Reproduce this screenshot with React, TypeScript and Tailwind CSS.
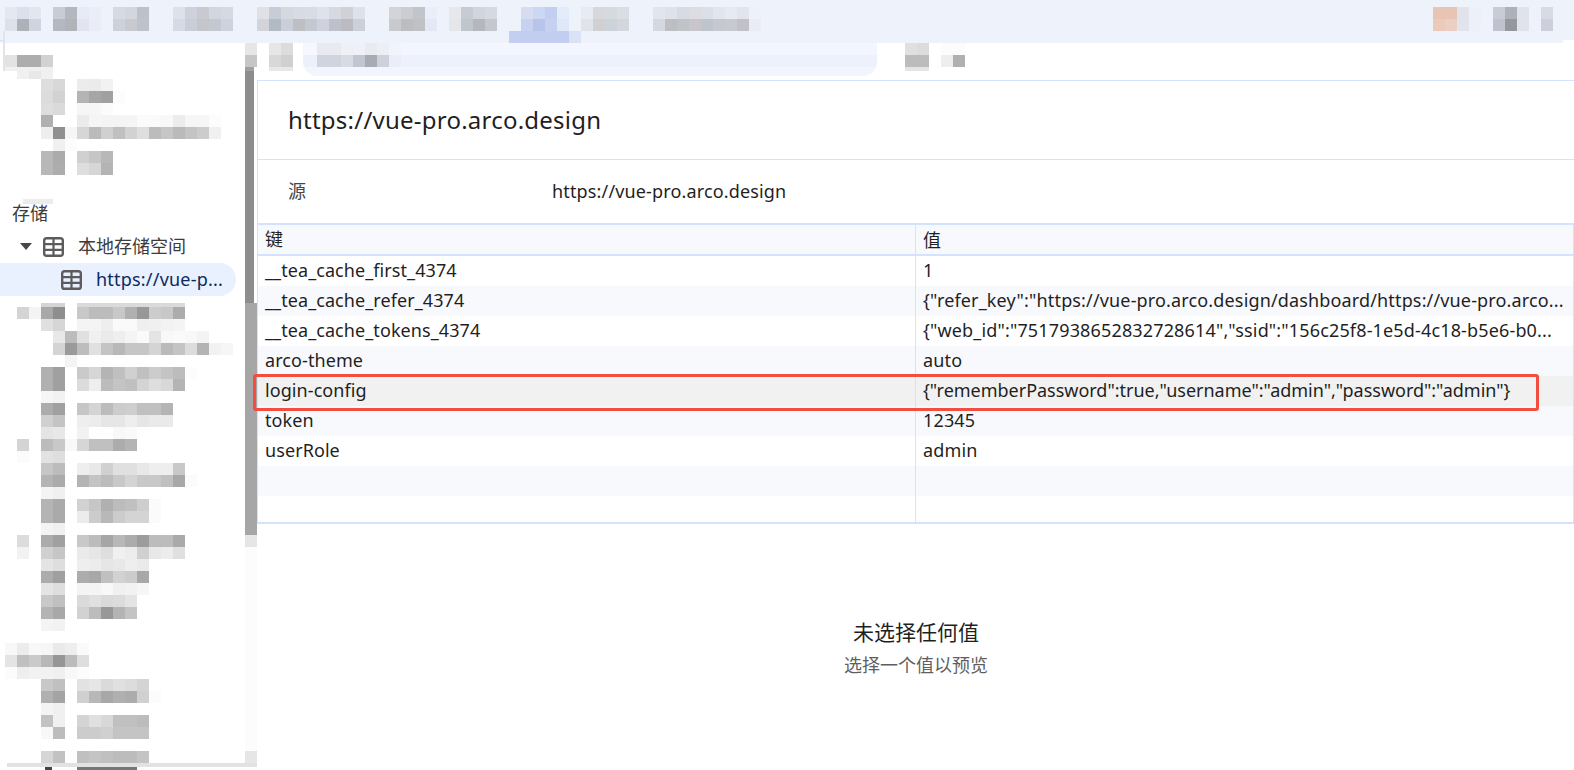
const MOSAIC: [number, number, string][] = [
  [7, 5, "e3e8f2 dbe0ea e2e6f0 -- c8ccd6 b4b8be e8ebf6 ebeef9 -- d6dae4 d2d6de bcc2cc -- -- dde1ea cdd1db c8cad0 d2d6de d4d9e3 -- -- dfe1e6 c7cdd8 d5d8de d6dbe4 d8dce5 dfe2ec d5d9e2 d0d1d6 dde1ea -- -- d2d4da cccdd1 c0c5ca eaeef8 -- e6e8ee c8ccd2 d2d5dc d6d9e0 -- -- d8dcf2 ccd7f3 c3cff0 e4ecfa -- e8ebf2 d6d8dc d5dadc dadde2 -- -- e2e5ed e0e2e9 d8dbe2 dcdce2 dae0ea e2e5ee e7eaf1 e3e5ee eef1fa"],
  [19, 5, "dce1ea adb2b8 d0d4de -- b4b8c0 b0b3b8 e2e5f1 eaedf8 -- cdd1da c8cad0 bcc3cc -- -- d6dae4 c8cdd8 c4c6cc c2c9d2 cdd2dc -- -- d2d4d9 b4bac4 c9ced8 bdbfc3 c3c9d2 cfd2dc bfc1ca bbbcc1 cbd0da -- -- c8cace bcbdc1 c0c1c4 e2e8f4 -- e5e6ea bfc6ce b4b7be c4c7ce -- -- c6d2ef b9c4ea c6d1ef dde8f9 -- e0e3ea d0d0d2 cdd3da d3d6dc -- -- d4d8df bdbec2 c0c4c6 c8c6ca c0c4cc c6c8d0 c8cacf c0c2c8 e9ecf6"],
  [31, 509, "c2cff0 c3cdf0 c3cdf0 c3cdf0 c3cdf0 dbe2f6"],
  [7, 1433, "e8c4b4 e9c3b3 e0e3ea edf0f9 -- c9ccd6 aeb1b8 e0e3ec -- d8dbe5"],
  [19, 1433, "ebcabc ebcfc4 e0e4ec edf0f9 -- c0c3cd 95979e e0e3ec -- cdd0da"],
  [43, 245, "e6 -- e6 dc"],
  [55, 5, "e3 ad ad d2"],
  [55, 245, "c6 -- d8 d0"],
  [43, 305, "f6f8fe e9eaf0 e9eaf0 eff0f6 f0f1f8 e9ebf0 eeeff5 f2f4fd"],
  [55, 305, "ebf0fa d0d4de d0d4de d8dbe4 c2c6d0 a9abb2 ced1dc ebeef9"],
  [43, 905, "e0 dc -- fc fc"],
  [55, 905, "bc bc -- ee b0"],
  [67, 17, "f0 e8 f0"],
  [79, 41, "de d8 -- ec eb f2"],
  [91, 41, "dc d2 -- b4 a6 a0 fc"],
  [103, 41, "de da -- f6 f6 fb"],
  [115, 41, "b0 -- -- eb f5 f4 f4 f5 fb fa f8 ec f6 f6 fc"],
  [127, 41, "ee 90 f6 d6 bb d0 c0 d2 de bc c6 ba c4 cc f0"],
  [139, 53, "f0 fc"],
  [151, 41, "b8 ab -- d0 c6 b8"],
  [163, 41, "b8 ad -- de d6 b4"],
  [307, 17, "d4 f4 a8 8e -- c8 bc bc c8 b0 98 cc c8 ac"],
  [319, 41, "e0 d6 -- f4 f4 ee fa fa ef f0 f2 f4"],
  [331, 53, "e8 bc e0 f0 ea ee f4 fa e4 f8 fa f8 f4"],
  [343, 53, "d4 9a bd e0 c4 b8 c6 c6 d4 ba c4 dc b4 f2 f6"],
  [355, 65, "f4"],
  [367, 41, "b0 a0 -- ca d6 b4 c0 d0 c0 cc c4 bc fc"],
  [379, 41, "b0 a0 -- dc ee bc c4 c0 d4 de d8 b4"],
  [391, 41, "f6 f2"],
  [403, 41, "ac a0 -- c6 d4 bc cc ce c0 c0 b4"],
  [415, 41, "d0 c4 -- ee ec e6 e6 ee e6 ea ea"],
  [427, 41, "e4 e8 -- f2 -- -- f8 fa"],
  [439, 17, "d4 -- bc c8 f8 d6 c0 c0 ac b4"],
  [451, 17, "fb -- e2 de"],
  [463, 41, "c6 bc -- ee e8 d0 e0 e0 e8 ee ee c8"],
  [475, 41, "b4 ab -- b4 c4 bc c8 d4 c8 c8 c0 a8 fb"],
  [487, 41, "f4 f0"],
  [499, 41, "b4 aa -- d2 c6 b0 bc c0 ce fb"],
  [511, 41, "b4 aa -- ec cc b8 cc d4 d4 fb"],
  [523, 41, "f4 f0"],
  [535, 17, "dc -- ac a0 -- c8 bc a6 b8 ac 9c bc bc aa"],
  [547, 17, "f2 -- d0 c6 -- ea e6 de f0 ec d0 e8 ec e0"],
  [559, 41, "e4 de -- ee ec e6 e8 ee ea"],
  [571, 41, "ac a0 -- ac a8 c0 d2 cc a8"],
  [583, 41, "e4 de -- f4 f4 f8 f0 f2 f6"],
  [595, 41, "c8 c0 -- da e0 da dc e4"],
  [607, 41, "b4 a8 -- d2 bc 98 b4 c4"],
  [619, 41, "f4 f2"],
  [643, 5, "f8 ec f8 f6 ea ee fa"],
  [655, 5, "e4 c0 ca b8 96 bc de"],
  [667, 5, "fc ee f2 f2 f0 f8 fc"],
  [679, 41, "c8 c0 -- e2 e6 da e0 dc d4"],
  [691, 41, "b0 a4 -- d0 b8 a8 b0 ac d0 fc"],
  [703, 41, "f4 f0"],
  [715, 41, "c2 f0 -- d4 e0 d8 c0 c0 bc"],
  [727, 41, "f8 bc -- cc cc d0 c4 c4 c4"],
  [751, 41, "d6 c2 -- c0 c4 c0 bc bc c4"],
];

function Mosaic() {
  const rects: React.ReactNode[] = [];
  MOSAIC.forEach(([y, x0, s]) => {
    s.trim().split(/\s+/).forEach((c, i) => {
      if (c === "--") return;
      const fill = c.length === 2 ? `#${c}${c}${c}` : `#${c}`;
      rects.push(<rect key={`${y}-${x0}-${i}`} x={x0 + i * 12} y={y} width={12} height={12} fill={fill} />);
    });
  });
  return (
    <svg className="absolute left-0 top-0 pointer-events-none" width={1574} height={770} viewBox="0 0 1574 770" shapeRendering="crispEdges">
      {rects}
      <rect x={3} y={31} width={2} height={40} fill="#e4e4e6" />
      <rect x={0} y={40} width={3} height={1} fill="#d3e3fd" />
      <rect x={1563} y={40} width={11} height={3} fill="#ffffff" />
      <rect x={5} y={67} width={36} height={4} fill="#f0f0f0" />
      <rect x={245} y={67} width={9} height={4} fill="#a0a0a0" />
      <rect x={269} y={67} width={24} height={4} fill="#e8e8e8" />
      <rect x={905} y={67} width={24} height={4} fill="#e4e4e4" />
      <rect x={23} y={199} width={30} height={5} fill="#ececec" />
      <rect x={41} y={303} width={24} height={4} fill="#d4d4d4" />
      <rect x={77} y={303} width={108} height={4} fill="#dadada" />
      <rect x={45} y={767} width={7} height={3} fill="#444444" />
      <rect x={77} y={767} width={60} height={3} fill="#777777" />
    </svg>
  );
}

function TableIcon({ className }: { className?: string }) {
  return (
    <svg className={className} width={21} height={20} viewBox="0 0 21 20" fill="none">
      <rect x={1.2} y={1.2} width={18.6} height={17.6} rx={2.4} stroke="#5c5c5c" strokeWidth={2.4} />
      <path d="M1 7.2H20M1 12.9H20M10.5 1V19" stroke="#5c5c5c" strokeWidth={2.2} />
    </svg>
  );
}

type Row = { k: string; v: string; tone: "plain" | "shade" | "sel"; tight?: boolean };
const ROWS: Row[] = [
  { k: "__tea_cache_first_4374", v: "1", tone: "plain" },
  { k: "__tea_cache_refer_4374", v: '{"refer_key":"https://vue-pro.arco.design/dashboard/https://vue-pro.arco...', tone: "shade" },
  { k: "__tea_cache_tokens_4374", v: '{"web_id":"7517938652832728614","ssid":"156c25f8-1e5d-4c18-b5e6-b0...', tone: "plain" },
  { k: "arco-theme", v: "auto", tone: "shade" },
  { k: "login-config", v: '{"rememberPassword":true,"username":"admin","password":"admin"}', tone: "sel", tight: true },
  { k: "token", v: "12345", tone: "shade" },
  { k: "userRole", v: "admin", tone: "plain" },
  { k: "", v: "", tone: "shade" },
];

function DataRow({ k, v, tone, tight }: Row) {
  const bg = tone === "shade" ? "bg-[#f8f9fd]" : tone === "sel" ? "bg-[#f1f1f1]" : "bg-white";
  return (
    <div className={`flex h-[30px] items-center ${bg}`}>
      <div className="h-full w-[657px] shrink-0 overflow-hidden whitespace-nowrap pl-[7px] leading-[29px]">{k}</div>
      <div className={`h-full flex-1 overflow-hidden whitespace-nowrap border-l border-[#d3e3fd] pl-[7px] leading-[29px] ${tight ? "tracking-[-0.02px]" : "tracking-[0.15px]"}`}>{v}</div>
    </div>
  );
}

export default function App() {
  return (
    <div className="relative flex h-[770px] w-[1574px] flex-col overflow-hidden bg-white text-[18px] text-[#1f1f1f] [font-family:'Noto_Sans','Noto_Sans_CJK_SC',sans-serif] tracking-[0.08px]">
      <div className="h-[43px] shrink-0 bg-[#eef2fb]" />
      <div className="flex min-h-0 flex-1">
        <aside className="flex w-[245px] shrink-0 flex-col pt-[155px]">
          <div className="h-[32px] pl-[12px] text-[#3c3c3c] leading-[30px] tracking-normal">存储</div>
          <div className="flex h-[33px] items-center">
            <svg className="ml-[20px]" width={12} height={7} viewBox="0 0 12 7"><path d="M0 0H12L6 7Z" fill="#474747" /></svg>
            <TableIcon className="ml-[11px]" />
            <span className="ml-[14px] text-[#3c3c3c] tracking-normal">本地存储空间</span>
          </div>
          <div className="flex h-[33px] w-[236px] items-center rounded-r-full bg-[#e9f0fe]">
            <TableIcon className="ml-[61px]" />
            <span className="ml-[14px] text-[#0b2a5e] tracking-[0.2px]">https://vue-p...</span>
          </div>
        </aside>
        <div className="flex w-[12px] shrink-0 flex-col pt-[28px]">
          <div className="h-[232px] w-[9px] shrink-0 bg-[#8d8d8d]" />
          <div className="h-[232px] shrink-0 bg-[#a6a6a6]" />
          <div className="h-[12px] shrink-0 bg-[#e6e6e6]" />
          <div className="h-[204px] shrink-0 bg-[#fcfcfc]" />
          <div className="h-[12px] shrink-0 bg-[#e6e6e6]" />
        </div>
        <main className="flex min-w-0 flex-1 flex-col">
          <div className="h-[37px] shrink-0 pl-[46px]">
            <div className="flex h-[33px] w-[574px] flex-col overflow-hidden rounded-b-[14px]">
              <div className="h-[12px] bg-[#f3f6fe]" />
              <div className="h-[12px] bg-[#edf1fb]" />
              <div className="h-[9px] bg-[#f2f5fd]" />
            </div>
          </div>
          <div className="flex h-[444px] shrink-0 flex-col border-l border-t border-[#d3e3fd]">
            <h1 className="flex h-[79px] shrink-0 items-center border-b border-[#d3e3fd] pl-[30px] text-[24px] font-normal tracking-[0.23px]">https://vue-pro.arco.design</h1>
            <div className="flex h-[63px] shrink-0 items-center">
              <span className="w-[294px] shrink-0 pl-[30px] text-[#474747]">源</span>
              <span className="tracking-[0.15px]">https://vue-pro.arco.design</span>
            </div>
            <div className="flex min-h-0 flex-1 flex-col overflow-hidden border-b-2 border-r border-t-2 border-[#d3e3fd]">
              <div className="flex h-[31px] shrink-0 items-center border-b-2 border-[#d3e3fd] bg-[#f8f9fd]">
                <div className="w-[657px] shrink-0 pl-[7px] leading-[31px]">键</div>
                <div className="h-full flex-1 border-l border-[#d3e3fd] pl-[7px] leading-[31px]">值</div>
              </div>
              {ROWS.map((r, i) => (
                <DataRow key={i} {...r} />
              ))}
              <div className="flex flex-1">
                <div className="w-[657px] shrink-0" />
                <div className="flex-1 border-l border-[#d3e3fd]" />
              </div>
            </div>
          </div>
          <div className="flex flex-col items-center pt-[92px] pl-[1px]">
            <div className="text-[21px] leading-[32px] tracking-normal text-[#1f1f1f]">未选择任何值</div>
            <div className="mt-[2px] text-[18px] leading-[30px] tracking-normal text-[#5f5f5f]">选择一个值以预览</div>
          </div>
        </main>
      </div>
      <div className="absolute left-[7px] top-[763px] h-[4px] w-[250px] bg-[#e2e2e2]" />
      <div className="absolute left-[253px] top-[374px] h-[37px] w-[1286px] rounded-[3px] border-[3px] border-[#f44c3f]" />
      <Mosaic />
    </div>
  );
}
